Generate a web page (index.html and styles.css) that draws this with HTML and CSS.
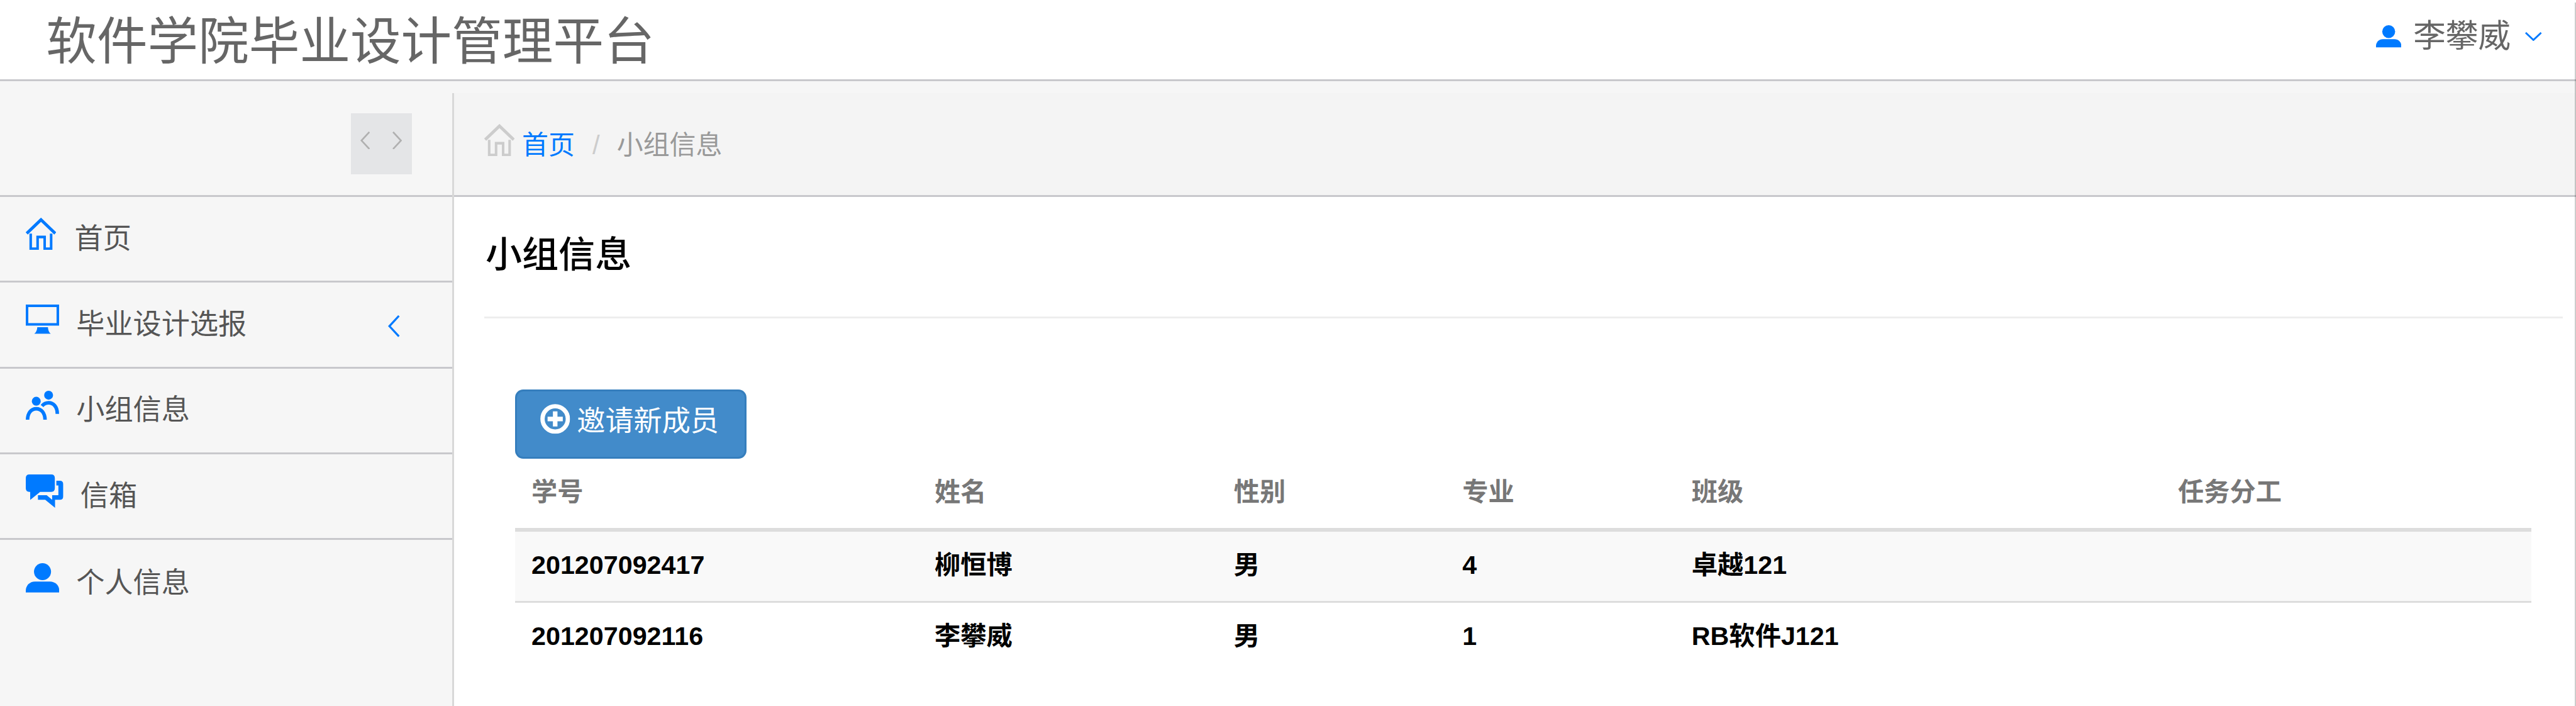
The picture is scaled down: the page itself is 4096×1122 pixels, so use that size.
FILE: index.html
```html
<!DOCTYPE html>
<html lang="zh-CN">
<head>
<meta charset="utf-8">
<title>软件学院毕业设计管理平台</title>
<link rel="stylesheet" href="styles.css">
</head>
<body>
<svg class="sprite" width="0" height="0">
  <symbol id="home" viewBox="0 0 60 64"><g fill="none" stroke="currentColor"><path stroke-width="6" d="M1.8 31 30 4 58.2 31"/><path stroke-width="5" d="M9.7 31.3V61H23.3V38H37.2V61H50V31.3"/></g></symbol>
  <symbol id="monitor" viewBox="0 0 66 58"><path fill="none" stroke="currentColor" stroke-width="5" d="M2.5 2.5H63.2V39.2H2.5Z"/><path fill="currentColor" d="M22.7 44.7H43.7C44 50 45.500 55 49.300 57.700H16.700C20.700 55 22.300 50 22.700 44.700Z"/></symbol>
  <symbol id="group" viewBox="0 0 66 58"><g fill="currentColor"><circle cx="20.700" cy="20.700" r="8.800"/><circle cx="45" cy="8.800" r="8.800"/></g><path fill="none" stroke="currentColor" stroke-width="7" d="M3.500 58C3.500 43.500 11 35.500 20.700 35.500S38 43.500 38 58M32 30C35.500 25.700 40 23.800 45 23.800C55 23.800 62.200 32 62.200 45.500"/></symbol>
  <symbol id="chat" viewBox="0 0 74 66"><path fill="currentColor" d="M7 0H50.300Q57.300 0 57.300 7V27.300Q57.300 34.300 50.300 34.300H28.300L8.700 50.300V34.300H7Q0 34.300 0 27.300V7Q0 0 7 0ZM60.300 12.300H67Q74 12.300 74 19.300V43Q74 50 67 50H57.700V65.700L38.300 50H24V41H41.300L52 50V41H64.300V21.700H60.300Z"/></symbol>
  <symbol id="person" viewBox="0 0 66 58"><path fill="currentColor" d="M0 58V54C0 44 8 36.300 18 36.300H48C58 36.300 66 44 66 54V58Z"/><circle fill="currentColor" cx="33" cy="16.800" r="16.800"/></symbol>
  <symbol id="plus" viewBox="0 0 59 59"><g fill="none" stroke="currentColor"><circle cx="29.500" cy="29.500" r="25" stroke-width="8.500"/><path stroke-width="9" d="M14.500 29.500H44.500M29.500 14.500V44.500"/></g></symbol>
  <symbol id="left" viewBox="0 0 23 43"><path fill="none" stroke="currentColor" stroke-width="4" d="M21.500 1.200 2.700 21.500 21.500 41.800"/></symbol>
  <symbol id="right" viewBox="0 0 23 43"><path fill="none" stroke="currentColor" stroke-width="4" d="M1.500 1.200 20.300 21.500 1.500 41.800"/></symbol>
  <symbol id="down" viewBox="0 0 33 18"><path fill="none" stroke="currentColor" stroke-width="3.600" d="M1.200 1.200 16.500 15.500 31.800 1.200"/></symbol>
</svg>

<header class="topbar">
  <div class="brand">软件学院毕业设计管理平台</div>
  <div class="user">
    <svg class="user-icon"><use href="#person"/></svg>
    <span>李攀威</span>
    <svg class="user-caret"><use href="#down"/></svg>
  </div>
</header>

<div class="layout">
  <aside class="sidebar">
    <div class="sidebar-head">
      <div class="toggle"><svg><use href="#left"/></svg><svg><use href="#right"/></svg></div>
    </div>
    <nav>
      <a class="item"><svg class="home"><use href="#home"/></svg><span>首页</span></a>
      <a class="item"><svg><use href="#monitor"/></svg><span>毕业设计选报</span><svg class="fold"><use href="#left"/></svg></a>
      <a class="item"><svg><use href="#group"/></svg><span>小组信息</span></a>
      <a class="item"><svg class="chat"><use href="#chat"/></svg><span>信箱</span></a>
      <a class="item"><svg><use href="#person"/></svg><span>个人信息</span></a>
    </nav>
  </aside>

  <main class="main">
    <div class="breadcrumb">
      <svg><use href="#home"/></svg>
      <a>首页</a><span class="slash">/</span><span>小组信息</span>
    </div>
    <h1>小组信息</h1>
    <div class="panel">
      <button class="invite"><svg><use href="#plus"/></svg><span>邀请新成员</span></button>
      <table>
        <colgroup><col class="c-id"><col class="c-name"><col class="c-sex"><col class="c-major"><col class="c-class"><col></colgroup>
        <thead><tr><th>学号</th><th>姓名</th><th>性别</th><th>专业</th><th>班级</th><th>任务分工</th></tr></thead>
        <tbody>
          <tr><td>201207092417</td><td>柳恒博</td><td>男</td><td>4</td><td>卓越121</td><td></td></tr>
          <tr><td>201207092116</td><td>李攀威</td><td>男</td><td>1</td><td>RB软件J121</td><td></td></tr>
        </tbody>
      </table>
    </div>
  </main>
</div>
<div class="scroll-edge"></div>
</body>
</html>
```
FILE: styles.css
```css
* { box-sizing: border-box; margin: 0; padding: 0; }
html { font-size: 80.63px; }
body {
  height: 1122px;
  overflow: hidden;
  display: flex;
  flex-direction: column;
  background: #f6f6f6;
  color: #555;
  font-family: "Liberation Sans", "Noto Sans CJK SC", sans-serif;
  font-size: .56rem;
}
svg { display: block; flex: none; }
.sprite { position: absolute; }

.topbar {
  flex: none;
  display: flex;
  justify-content: space-between;
  align-items: flex-start;
  height: 1.6rem;
  padding: 0 .67rem 0 .91rem;
  background: #fff;
  border-bottom: 3px solid #c8c8cc;
  color: #666;
}
.brand { font-size: 1rem; line-height: 1.64rem; }
.user {
  display: flex;
  align-items: center;
  height: 1.434rem;
  font-size: .64rem;
  line-height: 1.434rem;
}
.user-icon { width: .5rem; height: .44rem; margin-right: .235rem; color: #007aff; }
.user-caret { width: .33rem; height: .18rem; margin-left: .29rem; color: #007aff; }

.layout {
  flex: 1;
  display: grid;
  grid-template-columns: 8.955rem 1fr;
  padding-top: .235rem;
}
.sidebar { border-right: 3px solid #d8d8d8; }
.sidebar-head {
  display: flex;
  justify-content: flex-end;
  height: 2.045rem;
  padding: .4rem .8rem 0 0;
  border-bottom: 3px solid #c8c8cc;
}
.toggle {
  display: flex;
  align-items: center;
  justify-content: center;
  gap: .445rem;
  width: 1.2rem;
  height: 1.2rem;
  padding-bottom: .14rem;
  background: #e4e5e7;
  color: #b0b0b0;
}
.toggle svg { width: .19rem; height: .355rem; }
.item {
  display: flex;
  align-items: center;
  height: 1.691rem;
  padding: 0 1.034rem 0 .51rem;
  border-bottom: 3px solid #c8c8cc;
  line-height: 1.63rem;
}
.item:last-child { border-bottom: 0; }
.item svg { width: .66rem; height: .58rem; margin: 0 .335rem .2rem 0; color: #007aff; }
.item .home { width: .6rem; height: .64rem; margin-right: .36rem; }
.item .chat { width: .74rem; height: .66rem; }
.item .fold { width: .23rem; height: .43rem; margin: .06rem 0 0 auto; }

.main { background: #fff; color: #000; }
.breadcrumb {
  display: flex;
  align-items: center;
  height: 2.045rem;
  padding: .065rem 0 0 .59rem;
  background: #f4f4f4;
  border-bottom: 3px solid #c8c8cc;
  color: #999;
  font-size: .52rem;
  line-height: .8rem;
}
.breadcrumb svg { width: .6rem; height: .64rem; margin: 0 .15rem .22rem 0; color: #ccc; }
.breadcrumb a { color: #007aff; }
.slash { margin: 0 .335rem 0 .35rem; color: #ccc; }
h1 {
  height: 2.4rem;
  margin: 0 .26rem 0 .6rem;
  padding-left: .02rem;
  border-bottom: 3px solid #eee;
  font-size: .72rem;
  font-weight: 500;
  line-height: 2.28rem;
}
.panel { padding: 1.396rem .884rem 0 1.2rem; }
.invite {
  display: flex;
  align-items: center;
  width: 4.566rem;
  height: 1.367rem;
  padding: 0 0 .08rem .465rem;
  background: #428bca;
  border: 3px solid #357ebd;
  border-radius: .16rem;
  color: #fff;
  font: inherit;
  font-size: .56rem;
  line-height: 1rem;
}
.invite svg { width: .59rem; height: .59rem; margin: 0 .13rem .12rem 0; }

table {
  width: 100%;
  table-layout: fixed;
  border-collapse: separate;
  border-spacing: 0;
  font-size: .512rem;
  font-weight: 700;
  line-height: 1.32rem;
}
th, td { padding: 0 0 .04rem .325rem; text-align: left; vertical-align: top; height: 1.36rem; white-space: nowrap; }
th { height: 1.44rem; border-bottom: .08rem solid #ddd; color: #777; }
tbody tr:first-child td { background: #f9f9f9; }
tbody tr + tr td { border-top: 3px solid #ddd; }
.c-id { width: 7.95rem; }
.c-name { width: 5.9rem; }
.c-sex { width: 4.51rem; }
.c-major { width: 4.52rem; }
.c-class { width: 9.59rem; }

.scroll-edge {
  position: absolute;
  top: 4px;
  right: 0;
  bottom: 0;
  width: 2px;
  background: rgba(0, 0, 0, .2);
}
```
